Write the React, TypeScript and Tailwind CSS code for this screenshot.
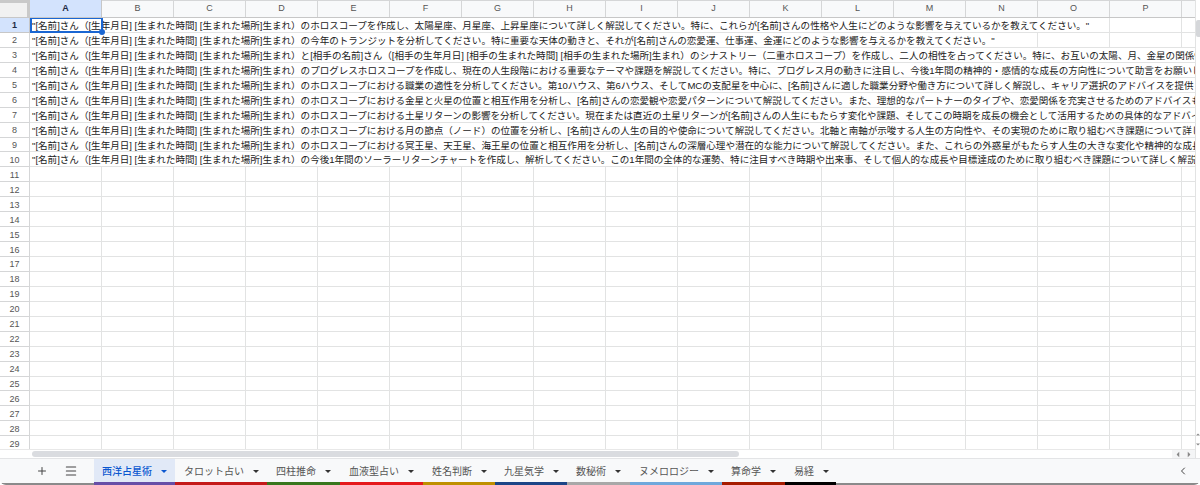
import { Plus, Menu, ChevronLeft } from "lucide-react";

const columns = ["A", "B", "C", "D", "E", "F", "G", "H", "I", "J", "K", "L", "M", "N", "O", "P"];

const who = "[名前]さん（[生年月日] [生まれた時間] [生まれた場所]生まれ）";

// span = how many columns the overflowing text covers
const prompts = [
  { span: 15, text: "のホロスコープを作成し、太陽星座、月星座、上昇星座について詳しく解説してください。特に、これらが[名前]さんの性格や人生にどのような影響を与えているかを教えてください。\"" },
  { span: 14, text: "の今年のトランジットを分析してください。特に重要な天体の動きと、それが[名前]さんの恋愛運、仕事運、金運にどのような影響を与えるかを教えてください。\"" },
  { span: 17, text: "と[相手の名前]さん（[相手の生年月日] [相手の生まれた時間] [相手の生まれた場所]生まれ）のシナストリー（二重ホロスコープ）を作成し、二人の相性を占ってください。特に、お互いの太陽、月、金星の関係性について" },
  { span: 17, text: "のプログレスホロスコープを作成し、現在の人生段階における重要なテーマや課題を解説してください。特に、プログレス月の動きに注目し、今後1年間の精神的・感情的な成長の方向性について助言をお願いします。" },
  { span: 17, text: "のホロスコープにおける職業の適性を分析してください。第10ハウス、第6ハウス、そしてMCの支配星を中心に、[名前]さんに適した職業分野や働き方について詳しく解説し、キャリア選択のアドバイスを提供してください。" },
  { span: 17, text: "のホロスコープにおける金星と火星の位置と相互作用を分析し、[名前]さんの恋愛観や恋愛パターンについて解説してください。また、理想的なパートナーのタイプや、恋愛関係を充実させるためのアドバイスも教えてください。" },
  { span: 17, text: "のホロスコープにおける土星リターンの影響を分析してください。現在または直近の土星リターンが[名前]さんの人生にもたらす変化や課題、そしてこの時期を成長の機会として活用するための具体的なアドバイスを" },
  { span: 17, text: "のホロスコープにおける月の節点（ノード）の位置を分析し、[名前]さんの人生の目的や使命について解説してください。北軸と南軸が示唆する人生の方向性や、その実現のために取り組むべき課題について詳しく解説" },
  { span: 17, text: "のホロスコープにおける冥王星、天王星、海王星の位置と相互作用を分析し、[名前]さんの深層心理や潜在的な能力について解説してください。また、これらの外惑星がもたらす人生の大きな変化や精神的な成長について" },
  { span: 17, text: "の今後1年間のソーラーリターンチャートを作成し、解析してください。この1年間の全体的な運勢、特に注目すべき時期や出来事、そして個人的な成長や目標達成のために取り組むべき課題について詳しく解説してください" },
];

const sheets = [
  { name: "西洋占星術", width: "w-[81px]", color: "bg-[#674ea7]", active: true },
  { name: "タロット占い", width: "w-[92px]", color: "bg-[#c41a1a]" },
  { name: "四柱推命", width: "w-[73px]", color: "bg-[#38761d]" },
  { name: "血液型占い", width: "w-[83px]", color: "bg-[#e5191c]" },
  { name: "姓名判断", width: "w-[72px]", color: "bg-[#bf9000]" },
  { name: "九星気学", width: "w-[72px]", color: "bg-[#1c4587]" },
  { name: "数秘術", width: "w-[63px]", color: "bg-[#a8a8a8]" },
  { name: "ヌメロロジー", width: "w-[92px]", color: "bg-[#6fa8dc]" },
  { name: "算命学", width: "w-[63px]", color: "bg-[#a61c00]" },
  { name: "易経", width: "w-[51px]", color: "bg-black" },
];

function Caret({ className }: { className: string }) {
  return (
    <svg width="6" height="3" viewBox="0 0 6 3" className={className}>
      <path d="M0 0h6L3 3z" fill="currentColor" />
    </svg>
  );
}

function EmptyCells({ from }: { from: number }) {
  return (
    <>
      {columns.slice(from).map((c) => (
        <div key={c} className="h-full w-[72px] flex-none border-r border-[#e2e3e3]" />
      ))}
      <div className="h-full flex-1" />
    </>
  );
}

function Row({ n, span, text }: { n: number; span?: number; text?: string }) {
  const selected = n === 1;
  return (
    <div className="relative flex h-[14.95px] flex-none">
      <div
        className={
          selected
            ? "flex w-[30px] flex-none items-center justify-center border-r border-b border-[#c7c7c7] bg-[#d3e3fd] pt-[2px] text-[9px] leading-none font-bold text-[#1f2a44]"
            : "flex w-[30px] flex-none items-center justify-center border-r border-b border-[#d5d6d7] bg-white pt-[2px] text-[9px] leading-none text-[#555]"
        }
      >
        {n}
      </div>
      <div className="flex min-w-0 flex-1 border-b border-[#e2e3e3]">
        {text ? (
          <>
            <div
              className={
                span === 15
                  ? "h-full w-[1080px] flex-none overflow-hidden border-r border-[#e2e3e3] pt-[1px] pl-[2px] text-[9.55px] leading-[13px] whitespace-nowrap text-[#222]"
                  : span === 14
                    ? "h-full w-[1008px] flex-none overflow-hidden border-r border-[#e2e3e3] pt-[1px] pl-[2px] text-[9.55px] leading-[13px] whitespace-nowrap text-[#222]"
                    : "h-full flex-1 overflow-hidden pt-[1px] pl-[2px] text-[9.55px] leading-[13px] whitespace-nowrap text-[#222]"
              }
            >
              &quot;{who}
              {text}
            </div>
            {span === 15 && <EmptyCells from={15} />}
            {span === 14 && <EmptyCells from={14} />}
          </>
        ) : (
          <EmptyCells from={0} />
        )}
      </div>
      {selected && (
        <div className="pointer-events-none absolute top-[-1px] left-[30px] h-[16px] w-[73px] border-2 border-[#1a66d2]">
          <span className="absolute right-[-4px] bottom-[-4px] size-[6px] rounded-full bg-[#1a66d2]" />
        </div>
      )}
    </div>
  );
}

export default function App() {
  const rows = Array.from({ length: 29 }, (_, i) => i + 1);
  return (
    <div className="flex h-[485px] w-[1200px] flex-col overflow-hidden rounded-b-[6px] bg-white font-['Liberation_Sans','Noto_Sans_CJK_JP',sans-serif]">
      <div className="flex min-h-0 flex-1">
        <div className="flex min-w-0 flex-1 flex-col">
          {/* column header */}
          <div className="flex h-[18px] flex-none border-b border-[#c7c7c7] bg-[#f8f9fa] text-[9px] text-[#555]">
            <div className="w-[30px] flex-none border-t-[3px] border-r-[3px] border-[#c9c9c9] bg-[#f1f1f1]" />
            {columns.map((c) => (
              <div
                key={c}
                className={
                  c === "A"
                    ? "flex w-[72px] flex-none items-center justify-center border-r border-[#c7c7c7] bg-[#d3e3fd] pt-[1px] font-bold text-[#1f2a44]"
                    : "flex w-[72px] flex-none items-center justify-center border-t border-r border-t-[#d5d6d7] border-r-[#d5d6d7]"
                }
              >
                {c}
              </div>
            ))}
            <div className="flex-1 border-t border-[#d5d6d7]" />
          </div>
          {/* rows */}
          <div className="flex min-h-0 flex-1 flex-col overflow-hidden">
            {rows.map((n) => {
              const p = prompts[n - 1];
              return <Row key={n} n={n} span={p?.span} text={p?.text} />;
            })}
          </div>
          {/* horizontal scrollbar */}
          <div className="flex h-[9px] flex-none items-center border-t border-[#e8e8e8]">
            <div className="ml-[32px] h-[6px] w-[707px] rounded-full bg-[#dadce0]" />
            <div className="ml-auto flex h-full w-[23px] items-center justify-around bg-[#f4f5f6] text-[#888]">
              <Caret className="rotate-90" />
              <Caret className="-rotate-90" />
            </div>
          </div>
        </div>
        {/* vertical scrollbar */}
        <div className="flex w-[5px] flex-none flex-col border-l border-[#e2e3e3]">
          <div className="mt-[20px] h-[17px] rounded-l-[2px] bg-[#d5d7da]" />
          <div className="mt-auto mb-[12px] flex flex-col gap-[7px] text-[#888]">
            <Caret className="w-[4px] rotate-180" />
            <Caret className="w-[4px]" />
          </div>
        </div>
      </div>
      {/* sheet tabs */}
      <div className="flex h-[27px] flex-none border-t border-[#e3e4e6] bg-[#f8f9fa]">
        <div className="flex w-[94px] flex-none items-center border-b-2 border-[#8a8a8a] text-[#444]">
          <Plus className="ml-[36px] size-[12px]" strokeWidth={2} />
          <Menu className="ml-[16px] size-[14px]" strokeWidth={1.8} />
        </div>
        {sheets.map((s) => (
          <div
            key={s.name}
            className={
              s.active
                ? `flex ${s.width} flex-none flex-col bg-[#e1e9f7] text-[#0b57d0]`
                : `flex ${s.width} flex-none flex-col text-[#555]`
            }
          >
            <div
              className={
                s.active
                  ? "flex flex-1 items-center gap-[9px] pt-[1px] pl-[8px] text-[10px] font-medium"
                  : "flex flex-1 items-center gap-[9px] pt-[1px] pl-[9px] text-[10px]"
              }
            >
              {s.name}
              <Caret className={s.active ? "text-[#0b57d0]" : "text-[#333]"} />
            </div>
            <div className={`h-[3px] ${s.color}`} />
          </div>
        ))}
        <div className="flex flex-1 items-center justify-end border-b-2 border-[#8a8a8a] pr-[11px] text-[#444]">
          <ChevronLeft className="size-[12px]" strokeWidth={2} />
        </div>
      </div>
    </div>
  );
}
